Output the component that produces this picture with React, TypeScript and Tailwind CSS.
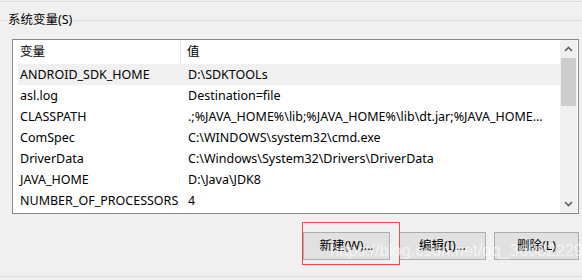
import React from "react";

const rows: [string, string][] = [
  ["ANDROID_SDK_HOME", "D:\\SDKTOOLs"],
  ["asl.log", "Destination=file"],
  ["CLASSPATH", ".;%JAVA_HOME%\\lib;%JAVA_HOME%\\lib\\dt.jar;%JAVA_HOME%\\lib\\tools.jar"],
  ["ComSpec", "C:\\WINDOWS\\system32\\cmd.exe"],
  ["DriverData", "C:\\Windows\\System32\\Drivers\\DriverData"],
  ["JAVA_HOME", "D:\\Java\\JDK8"],
  ["NUMBER_OF_PROCESSORS", "4"],
];

export default function App() {
  return (
    <div
      className="relative w-[582px] h-[280px] overflow-hidden bg-[#f0f0f0] text-[12.5px] text-black"
      style={{ fontFamily: '"Noto Sans", "Noto Sans CJK SC", sans-serif' }}
    >
      <div className="h-[1px]" />
      <div className="h-[1px] bg-[#dcdcdc]" />
      <div className="h-[10px]" />
      <div className="flex items-center h-[16px]">
        <div className="w-[7px] h-[1px] bg-[#dcdcdc]" />
        <span className="px-[1px] leading-[16px]">系统变量(S)</span>
        <div className="flex-1 h-[1px] bg-[#dcdcdc]" />
      </div>
      <div className="h-[11px]" />
      <div className="ml-[12px] w-[567px] h-[175px] border border-[#828790] bg-white flex">
        <div className="flex-1 pl-[5px] flex flex-col">
          <div className="flex h-[24px] items-center">
            <div className="w-[163px] h-full border-r border-[#e5e5e5] pl-[2px] flex items-center">变量</div>
            <div className="pl-[6px]">值</div>
          </div>
          {rows.map(([k, v], i) => (
            <div
              key={k}
              className={`flex h-[21px] items-center pt-[1px] ${i === 0 ? "bg-[#f0f0f0]" : ""}`}
            >
              <div className="w-[163px] pl-[2px] whitespace-nowrap overflow-hidden">{k}</div>
              <div className="pl-[7px] w-[372px] whitespace-nowrap overflow-hidden text-ellipsis">{v}</div>
            </div>
          ))}
        </div>
        <div className="w-[17px] mr-[1px] bg-[#f0f0f0] flex flex-col">
          <div className="h-[18px] flex items-center justify-center">
            <svg width="9" height="6" viewBox="0 0 9 6">
              <path d="M1 5 L4.5 1.5 L8 5" stroke="#606060" strokeWidth="1.6" fill="none" />
            </svg>
          </div>
          <div className="mx-[1px] h-[48px] bg-[#cdcdcd]" />
          <div className="flex-1" />
          <div className="h-[18px] flex items-center justify-center">
            <svg width="9" height="6" viewBox="0 0 9 6">
              <path d="M1 1 L4.5 4.5 L8 1" stroke="#606060" strokeWidth="1.6" fill="none" />
            </svg>
          </div>
        </div>
      </div>
      <div className="h-[18px]" />
      <div className="flex h-[28px] pl-[303px] gap-[9px]">
        <button className="w-[87px] h-full bg-[#e1e1e1] border border-[#adadad]">新建(W)...</button>
        <button className="w-[87px] h-full bg-[#e1e1e1] border border-[#adadad]">编辑(I)...</button>
        <button className="w-[85px] h-full bg-[#e1e1e1] border border-[#adadad] ml-[-1px]">删除(L)</button>
      </div>
      <div className="h-[16px]" />
      <div className="h-[1px] bg-[#dcdcdc]" />
      <div className="absolute left-[302px] top-[222px] w-[98px] h-[43px] border border-[#e84c4c]" />
      <div
        className="absolute left-[330px] top-[239px] text-[16.5px] leading-[22px] text-white/60 whitespace-nowrap"
        style={{ fontFamily: '"Liberation Sans", Arial, sans-serif' }}
      >
        https://blog.csdn.net/qq_36082229
      </div>
    </div>
  );
}
